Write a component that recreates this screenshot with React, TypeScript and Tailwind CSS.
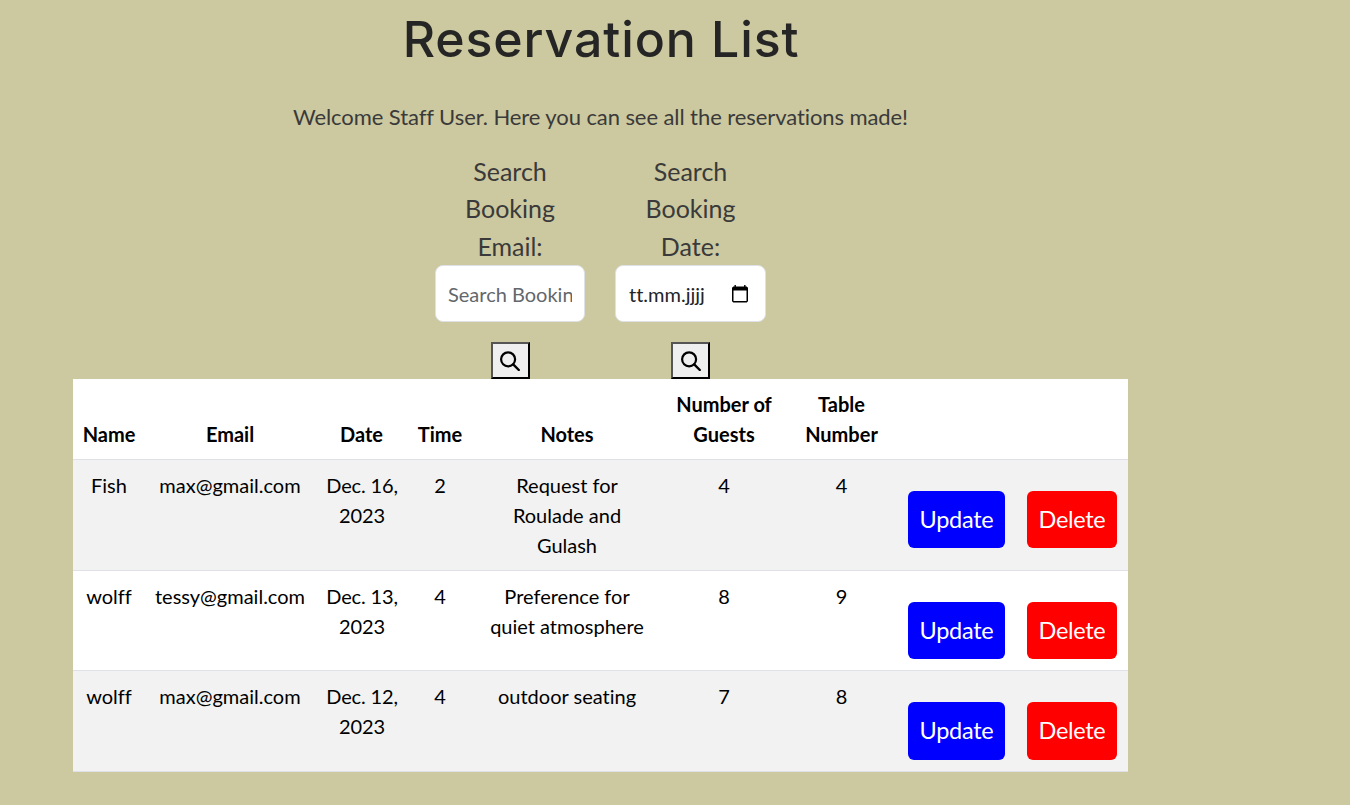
import React from "react";

type Reservation = {
  name: string;
  email: string;
  date: string;
  time: number;
  notes: string;
  guests: number;
  table: number;
  rowClass: string;
  buttonClass: string;
};

const reservations: Reservation[] = [
  { name: "Fish", email: "max@gmail.com", date: "Dec. 16, 2023", time: 2, notes: "Request for Roulade and Gulash", guests: 4, table: 4, rowClass: "h-[111px] bg-[#f2f2f2]", buttonClass: "h-[57px] pb-px" },
  { name: "wolff", email: "tessy@gmail.com", date: "Dec. 13, 2023", time: 4, notes: "Preference for quiet atmosphere", guests: 8, table: 9, rowClass: "h-[100px] bg-white", buttonClass: "h-[57px] pb-px" },
  { name: "wolff", email: "max@gmail.com", date: "Dec. 12, 2023", time: 4, notes: "outdoor seating", guests: 7, table: 8, rowClass: "h-[101px] bg-[#f2f2f2]", buttonClass: "h-[58px] pb-0.5" },
];

const columns =
  "grid grid-cols-[72px_170px_93px_64px_190px_124px_111px_119px_112px] border-b border-[#dee2e6] text-center text-[20px] leading-[30px] text-black";

function SearchButton() {
  return (
    <button
      type="button"
      aria-label="Search"
      className="mt-5 flex h-[37px] w-[39px] items-center justify-center border-2 border-t-[#555] border-l-[#555] border-r-black border-b-black bg-[#efefef]"
    >
      <svg viewBox="0 0 20 20" className="h-5 w-5" fill="none" stroke="black">
        <circle cx="8.1" cy="8.3" r="7" strokeWidth="2.2" />
        <path d="M13.2 13.4 18.8 19" strokeWidth="2.4" strokeLinecap="round" />
      </svg>
    </button>
  );
}

function SearchField({ label, widthClass, children }: { label: string; widthClass: string; children: React.ReactNode }) {
  return (
    <div className={`${widthClass} flex flex-col items-center`}>
      <span className="h-[112px] w-[110px] text-center text-[25px] leading-[37.4px] text-[#3a3a3a]">{label}</span>
      <div className="flex h-[57px] w-full items-center rounded-lg border border-[#dee2e6] bg-white px-3 text-[20px]">
        {children}
      </div>
      <SearchButton />
    </div>
  );
}

export default function App() {
  return (
    <main className="h-[805px] overflow-hidden bg-[#ccc89f] font-['Lato',sans-serif] [font-variant-ligatures:none]">
      <div className="ml-[73px] flex w-[1055px] flex-col items-center">
        <h1 className="mt-2 h-[62px] pl-px font-['Inter',sans-serif] text-[50px] leading-[63px] font-medium tracking-[0.9px] whitespace-nowrap text-[#252525]">
          Reservation List
        </h1>
        <p className="mt-[30px] text-[22px] leading-[33px] tracking-[-0.08px] whitespace-nowrap text-[#3a3a3a]">
          Welcome Staff User. Here you can see all the reservations made!
        </p>
        <div className="mt-5 flex h-[226px] gap-[30px]">
          <SearchField label="Search Booking Email:" widthClass="w-[150px]">
            <input
              type="text"
              placeholder="Search Booking Email"
              className="w-full min-w-0 bg-transparent pt-px outline-none placeholder:text-[#63676b]"
            />
          </SearchField>
          <SearchField label="Search Booking Date:" widthClass="w-[151px]">
            <span className="flex w-full items-center justify-between pt-px pl-px text-[#212529]">
              tt.mm.jjjj
              <svg viewBox="0 0 16 18" className="mr-[5px] mb-px h-[18px] w-4" fill="black">
                <path fillRule="evenodd" d="M2.5 0h1.4v1.5h8.2V0h1.4v1.5h1.2L16 2.8v13.4L14.7 17.5H1.3L0 16.2V2.8l1.3-1.3h1.2zM1.5 5.5v10.4h13V5.5z" />
              </svg>
            </span>
          </SearchField>
        </div>
        <section className="w-full">
          <div className={`${columns} h-[81px] items-end bg-white pb-2.5 font-bold`}>
            <span>Name</span>
            <span>Email</span>
            <span>Date</span>
            <span>Time</span>
            <span>Notes</span>
            <span className="px-2.5">Number of Guests</span>
            <span className="px-2.5">Table Number</span>
          </div>
          {reservations.map((r) => (
            <div key={r.date} className={`${columns} ${r.rowClass} items-start pt-2.5`}>
              <span>{r.name}</span>
              <span>{r.email}</span>
              <span className="pr-[7px] pl-2 tracking-[-0.15px]">{r.date}</span>
              <span>{r.time}</span>
              <span className="px-4">{r.notes}</span>
              <span>{r.guests}</span>
              <span>{r.table}</span>
              <button type="button" className={`${r.buttonClass} mx-[11px] mt-[21px] rounded-md bg-[#0000ff] text-[23.5px] tracking-[-0.3px] text-white`}>Update</button>
              <button type="button" className={`${r.buttonClass} mx-[11px] mt-[21px] rounded-md bg-[#ff0000] text-[23.5px] tracking-[-0.3px] text-white`}>Delete</button>
            </div>
          ))}
        </section>
      </div>
    </main>
  );
}
